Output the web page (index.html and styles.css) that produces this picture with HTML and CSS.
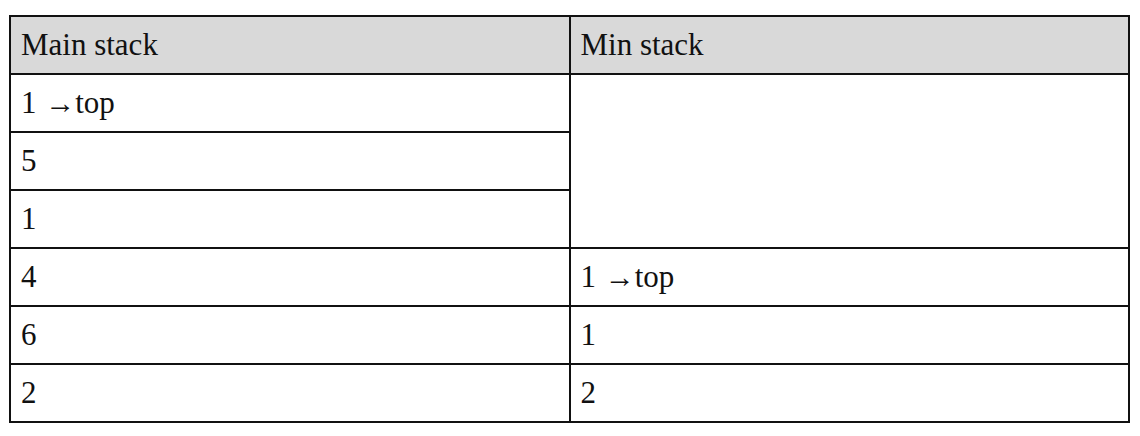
FILE: index.html
```html
<!DOCTYPE html>
<html>
<head>
<meta charset="utf-8">
<link rel="stylesheet" href="styles.css">
</head>
<body>
<table class="stacks">
  <thead>
    <tr><th>Main stack</th><th>Min stack</th></tr>
  </thead>
  <tbody>
    <tr><td>1 <span class="arrow">→</span>top</td><td rowspan="3"></td></tr>
    <tr><td>5</td></tr>
    <tr><td>1</td></tr>
    <tr><td>4</td><td>1 <span class="arrow">→</span>top</td></tr>
    <tr><td>6</td><td>1</td></tr>
    <tr><td>2</td><td>2</td></tr>
  </tbody>
</table>
</body>
</html>
```

FILE: styles.css
```css
html, body {
  margin: 0;
  padding: 0;
  background: #ffffff;
}
body {
  padding: 15px 0 0 9px;
}
.stacks {
  border-collapse: collapse;
  width: 1121px;
  table-layout: fixed;
  font-family: "Liberation Serif", "Times New Roman", serif;
  font-size: 31px;
  color: #111;
}
.stacks th,
.stacks td {
  border: 2px solid #111;
  height: 56px;
  padding: 0 10px 0 10px;
  text-align: left;
  vertical-align: middle;
  font-weight: normal;
  width: 50%;
}
.stacks th {
  background: #d9d9d9;
}
.arrow {
  font-size: 30px;
  margin-left: 1px;
}
```
